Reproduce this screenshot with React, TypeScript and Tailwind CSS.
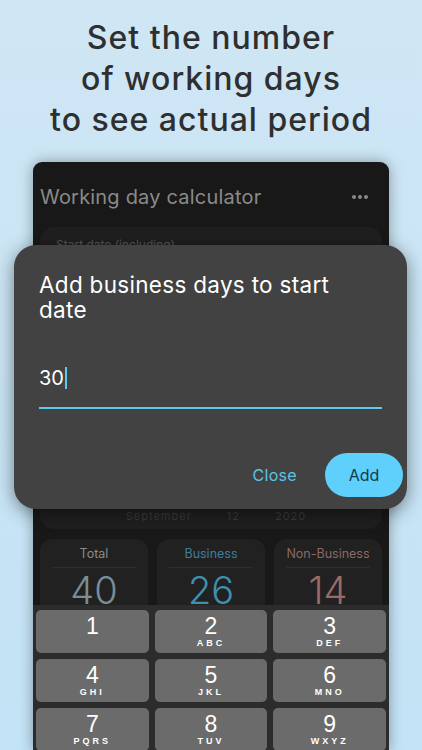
import React from 'react';

const font = { fontFamily: 'Inter, "Noto Sans", sans-serif' };

const keys: Array<[string, string]> = [
  ['1', ''],
  ['2', 'ABC'],
  ['3', 'DEF'],
  ['4', 'GHI'],
  ['5', 'JKL'],
  ['6', 'MNO'],
  ['7', 'PQRS'],
  ['8', 'TUV'],
  ['9', 'WXYZ'],
];

function StatCard({ label, value, labelClass, valueClass }: { label: string; value: string; labelClass: string; valueClass: string }) {
  return (
    <div className="flex h-[80px] flex-col items-center rounded-xl bg-[#212121] px-3 pt-[7px]">
      <div className={`text-[12.5px] leading-4 ${labelClass}`}>{label}</div>
      <div className="mt-[5px] h-px w-full bg-[#2e2e2e]" />
      <div className={`mt-[2px] text-[38px] font-light leading-[40px] ${valueClass}`}>{value}</div>
    </div>
  );
}

function Key({ digit, letters }: { digit: string; letters: string }) {
  return (
    <div className="flex h-[43px] flex-col items-center rounded-[5px] bg-[#6b6b6b] pt-[4px] text-white">
      <div className="text-[23px] leading-[24px]" style={{ fontFamily: '"Liberation Sans", Arial, sans-serif' }}>{digit}</div>
      {letters && (
        <div className="text-[9px] font-bold leading-[11px] tracking-[3px]" style={{ fontFamily: '"Liberation Sans", Arial, sans-serif' }}>
          {letters}
        </div>
      )}
    </div>
  );
}

export default function App() {
  return (
    <div className="flex h-[750px] w-full flex-col items-center overflow-hidden bg-gradient-to-b from-[#cfe6f4] to-[#c3e3f6]" style={font}>
      <h1 className="pt-[17px] text-center text-[32px] font-medium leading-[41px] tracking-[1px] text-[#2f2f2f]">
        Set the number
        <br />
        of working days
        <br />
        to see actual period
      </h1>

      <div className="relative mt-[22px] flex w-[356px] flex-1 flex-col rounded-t-[9px] bg-[#181818] shadow-[0_0_14px_rgba(0,0,0,0.35)]">
        <div className="flex items-center justify-between px-[7px] pt-[22px]">
          <div className="text-[20px] leading-[26px] tracking-[0.2px] text-[#8a8a8a]">Working day calculator</div>
          <div className="mr-[14px] flex gap-[2px]">
            <span className="h-[4px] w-[4px] rounded-full bg-[#8a8a8a]" />
            <span className="h-[4px] w-[4px] rounded-full bg-[#8a8a8a]" />
            <span className="h-[4px] w-[4px] rounded-full bg-[#8a8a8a]" />
          </div>
        </div>

        <div className="mx-[7px] mt-[17px] flex h-[302px] flex-col justify-between rounded-[14px] bg-[#1f1f1f] px-4 pb-[5px] pt-[9px]">
          <div className="text-[12px] text-[#555]">Start date (including)</div>
          <div className="flex justify-center gap-[35px] pl-[10px] text-[11px] tracking-[1px] text-[#3a3a3a]">
            <span>September</span>
            <span>12</span>
            <span>2020</span>
          </div>
        </div>

        <div className="mx-[7px] mt-[10px] grid h-[66px] grid-cols-3 gap-[9px] overflow-hidden">
          <StatCard label="Total" value="40" labelClass="text-[#8c8c8c]" valueClass="text-[#7b8d97]" />
          <StatCard label="Business" value="26" labelClass="text-[#3d7f9b]" valueClass="text-[#3f8fae]" />
          <StatCard label="Non-Business" value="14" labelClass="text-[#8a6963]" valueClass="text-[#9b6b63]" />
        </div>

        <div className="grid flex-1 grid-cols-3 content-start gap-x-[6px] gap-y-[6px] bg-[#2c2c2c] px-[3px] pt-[5px]">
          {keys.map(([d, l]) => (
            <Key key={d} digit={d} letters={l} />
          ))}
        </div>

        <div className="absolute left-[-19px] top-[83px] w-[393px] rounded-[22px] bg-[#424242] px-[25px] pb-[12px] pt-[27px] shadow-[0_4px_18px_rgba(0,0,0,0.45)]">
          <div className="max-w-[310px] text-[22.5px] leading-[25px] tracking-[0.3px] text-white">Add business days to start date</div>
          <div className="mt-[44px] flex items-center text-[20px] leading-[24px] text-white">
            30
            <span className="ml-[1px] inline-block h-[22px] w-[2px] bg-[#5ec8ee]" />
          </div>
          <div className="mt-[17px] h-[2px] w-full bg-[#5ec8ee]" />
          <div className="mt-[44px] flex items-center justify-end gap-[28px]">
            <span className="text-[16px] tracking-[0.3px] text-[#5bc4e8]">Close</span>
            <button className="mr-[-21px] h-[44px] w-[78px] rounded-full bg-[#5fd0fb] text-[16px] text-[#123c4c]">Add</button>
          </div>
        </div>
      </div>
    </div>
  );
}
